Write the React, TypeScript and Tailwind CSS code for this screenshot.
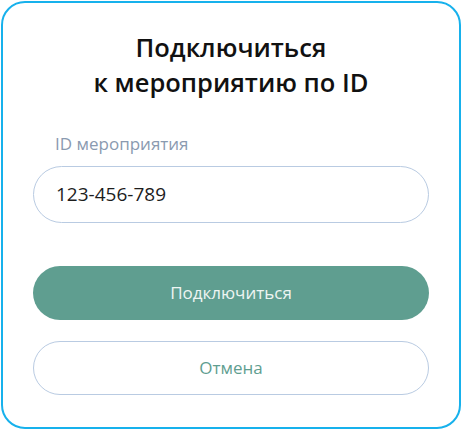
export default function App() {
  return (
    <div className="h-[430px] w-[462px] bg-white p-px" style={{ fontFamily: '"Open Sans", "Noto Sans", sans-serif' }}>
      <div className="flex h-[428px] w-[460px] flex-col rounded-[24px] border-2 border-[#17b1ec] px-[30px] pt-[27px]">
        <h1 className="text-center text-[25.5px] font-semibold leading-[35px] text-[#111]">
          Подключиться
          <br />к мероприятию по ID
        </h1>

        <label className="mt-[32px] pl-[22px] text-[17px] leading-[24px] text-[#8a9ab0]">ID мероприятия</label>
        <div className="mt-[10px] flex h-[57px] items-center rounded-full border border-[#b9cbe2] pl-[22px]">
          <span className="text-[19px] text-[#1d1d1d]">123-456-789</span>
        </div>

        <button className="mt-[43px] h-[54px] rounded-full bg-[#5f9e90] text-[17px] text-[#eef5f3]">Подключиться</button>
        <button className="mt-[21px] h-[54px] rounded-full border border-[#b9cbe2] bg-white text-[17px] text-[#5f9e90]">
          Отмена
        </button>
      </div>
    </div>
  )
}
